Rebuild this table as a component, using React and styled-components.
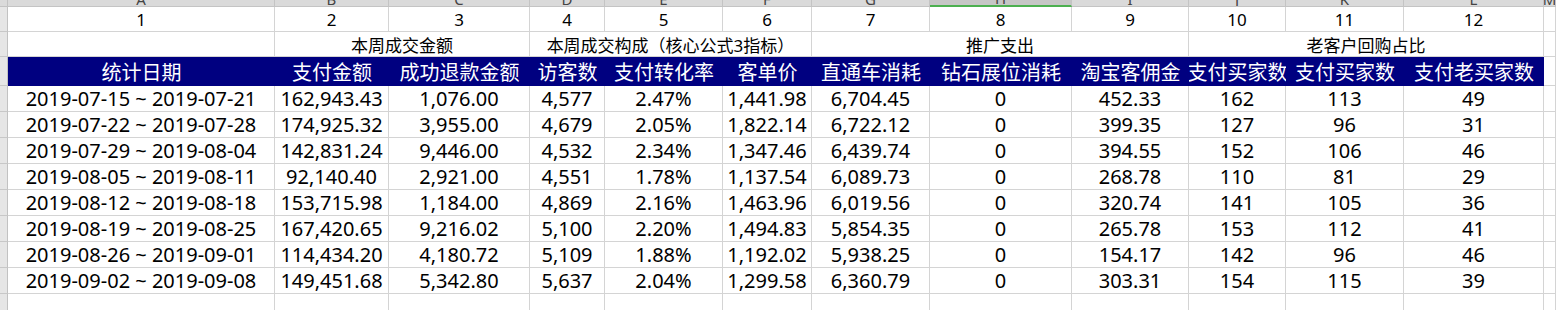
import React from 'react';
import styled, { createGlobalStyle, css } from 'styled-components';

const GlobalStyle = createGlobalStyle`
  html, body {
    margin: 0;
    padding: 0;
    background: #fff;
  }
  body {
    font-family: "Noto Sans", "Noto Sans CJK SC", sans-serif;
    color: #000;
  }
`;

const COLS = [267, 114, 141, 75, 118, 89, 118, 142, 117, 97, 118, 140];
const LETTERS = ['A', 'B', 'C', 'D', 'E', 'F', 'G', 'H', 'I', 'J', 'K', 'L', 'M'];

const HEADERS = [
  '统计日期', '支付金额', '成功退款金额', '访客数', '支付转化率', '客单价',
  '直通车消耗', '钻石展位消耗', '淘宝客佣金', '支付买家数', '支付买家数', '支付老买家数',
];

const GROUPS = [
  { span: 1, label: '' },
  { span: 2, label: '本周成交金额' },
  { span: 3, label: '本周成交构成（核心公式3指标）' },
  { span: 3, label: '推广支出' },
  { span: 3, label: '老客户回购占比' },
];

const ROWS = [
  ['2019-07-15 ~ 2019-07-21', '162,943.43', '1,076.00', '4,577', '2.47%', '1,441.98', '6,704.45', '0', '452.33', '162', '113', '49'],
  ['2019-07-22 ~ 2019-07-28', '174,925.32', '3,955.00', '4,679', '2.05%', '1,822.14', '6,722.12', '0', '399.35', '127', '96', '31'],
  ['2019-07-29 ~ 2019-08-04', '142,831.24', '9,446.00', '4,532', '2.34%', '1,347.46', '6,439.74', '0', '394.55', '152', '106', '46'],
  ['2019-08-05 ~ 2019-08-11', '92,140.40', '2,921.00', '4,551', '1.78%', '1,137.54', '6,089.73', '0', '268.78', '110', '81', '29'],
  ['2019-08-12 ~ 2019-08-18', '153,715.98', '1,184.00', '4,869', '2.16%', '1,463.96', '6,019.56', '0', '320.74', '141', '105', '36'],
  ['2019-08-19 ~ 2019-08-25', '167,420.65', '9,216.02', '5,100', '2.20%', '1,494.83', '5,854.35', '0', '265.78', '153', '112', '41'],
  ['2019-08-26 ~ 2019-09-01', '114,434.20', '4,180.72', '5,109', '1.88%', '1,192.02', '5,938.25', '0', '154.17', '142', '96', '46'],
  ['2019-09-02 ~ 2019-09-08', '149,451.68', '5,342.80', '5,637', '2.04%', '1,299.58', '6,360.79', '0', '303.31', '154', '115', '39'],
];

const Sheet = styled.div`
  display: grid;
  grid-template-columns: 8px ${COLS.map(w => `${w}px`).join(' ')} 1fr;
  grid-template-rows: 7px 25px 25px 29px repeat(8, 26px) 26px;
  width: 1556px;
  height: 310px;
  overflow: hidden;
`;

const Corner = styled.div`
  background: #dadada;
  border-right: 1px solid #c2c2c2;
  border-bottom: 1px solid #c2c2c2;
  box-sizing: border-box;
`;

const ColHead = styled.div`
  display: flex;
  align-items: flex-end;
  justify-content: center;
  overflow: hidden;
  box-sizing: border-box;
  background: #dadada;
  border-right: 1px solid #c4c4c4;
  border-bottom: 1px solid #c4c4c4;
  color: #444;
  font-size: 15px;
  line-height: 15px;
  ${p => p.$selected && css`
    background: #c6c6c6;
    border-bottom: 2px solid #4caf50;
  `}
`;

const Letter = styled.span`
  margin-bottom: -1px;
`;

const RowHead = styled.div`
  background: #e6e6e6;
  border-right: 1px solid #c2c2c2;
  border-bottom: 1px solid #c8c8c8;
  box-sizing: border-box;
`;

const Cell = styled.div`
  display: flex;
  align-items: center;
  justify-content: center;
  overflow: hidden;
  white-space: nowrap;
  box-sizing: border-box;
  border-right: 1px solid #d4d4d4;
  border-bottom: 1px solid #d4d4d4;
  font-size: ${p => p.$size || 20}px;
  grid-column: span ${p => p.$span || 1};
`;

const HeadCell = styled.div`
  display: flex;
  align-items: center;
  justify-content: center;
  overflow: hidden;
  white-space: nowrap;
  background: #000080;
  color: #fff;
  font-size: 20px;
`;

export default function App() {
  return (
    <>
      <GlobalStyle />
      <Sheet>
        <Corner />
        {LETTERS.map(l => (
          <ColHead key={l} $selected={l === 'H'}>
            <Letter>{l}</Letter>
          </ColHead>
        ))}

        <RowHead />
        {COLS.map((_, i) => (
          <Cell key={i} $size={17}>{i + 1}</Cell>
        ))}
        <Cell />

        <RowHead />
        {GROUPS.map((g, i) => (
          <Cell key={i} $span={g.span} $size={17}>{g.label}</Cell>
        ))}
        <Cell />

        <RowHead />
        {HEADERS.map((h, i) => (
          <HeadCell key={i}>{h}</HeadCell>
        ))}
        <Cell />

        {ROWS.map((row, r) => (
          <React.Fragment key={r}>
            <RowHead />
            {row.map((v, c) => (
              <Cell key={c}>{v}</Cell>
            ))}
            <Cell />
          </React.Fragment>
        ))}

        <RowHead />
        {COLS.map((_, i) => (
          <Cell key={i} />
        ))}
        <Cell />
      </Sheet>
    </>
  );
}
